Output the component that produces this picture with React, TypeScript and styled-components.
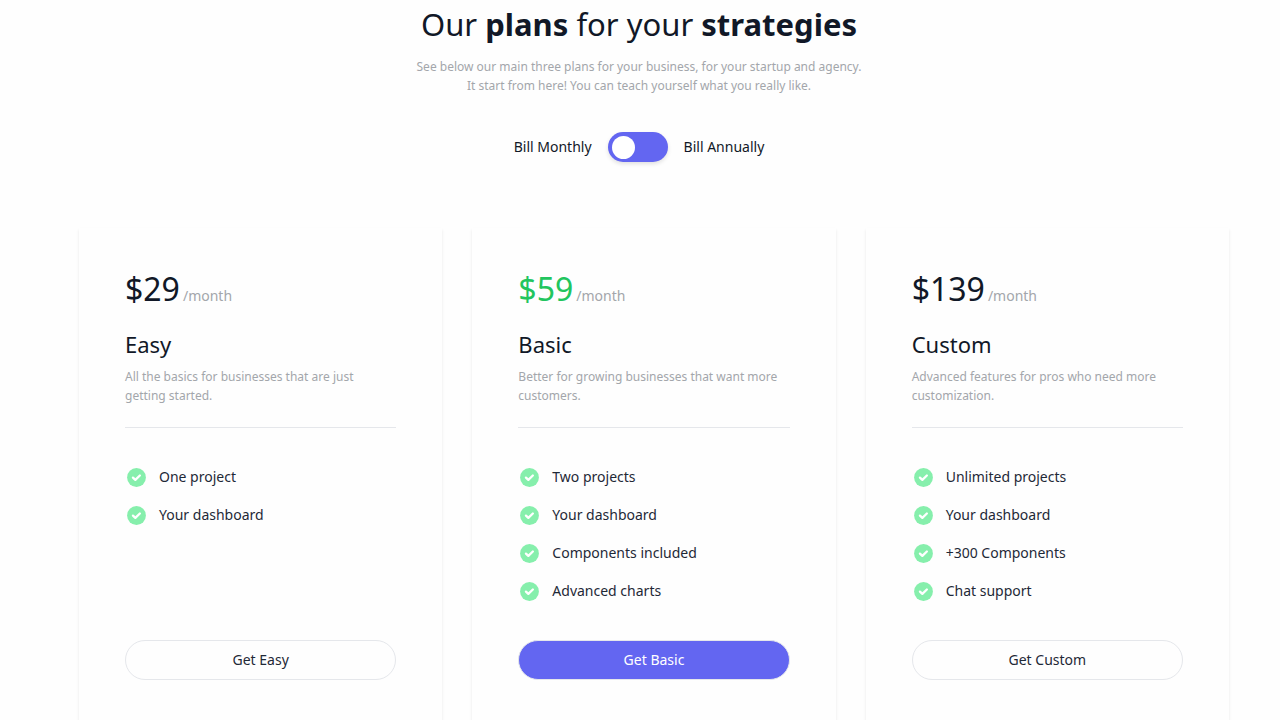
import React, { useState } from "react";
import styled, { createGlobalStyle } from "styled-components";

const GlobalStyle = createGlobalStyle`
  *, *::before, *::after { box-sizing: border-box; }
  body {
    margin: 0;
    background: #fefefe;
    color: #111827;
    font-family: "Noto Sans", "Open Sans", sans-serif;
    font-size: 14px;
    line-height: 24px;
  }
  h1, h2, p, ul { margin: 0; padding: 0; font-weight: 400; }
  ul { list-style: none; }
`;

const Page = styled.main`
  padding: 4px 51px 0 49px;
`;

const Header = styled.header`
  display: flex;
  flex-direction: column;
  align-items: center;
  text-align: center;
`;

const Title = styled.h1`
  font-size: 31px;
  line-height: 40px;
`;

const Muted = styled.p`
  color: #a3a6ab;
  font-size: 12px;
  line-height: 19px;
`;

const Intro = styled(Muted)`
  max-width: 520px;
  margin-top: 13px;
`;

const Billing = styled.div`
  display: flex;
  align-items: center;
  gap: 16px;
  margin-top: 37px;
`;

const Switch = styled.input`
  appearance: none;
  display: flex;
  align-items: center;
  width: 60px;
  height: 30px;
  margin: 0;
  padding: 0 4px;
  border-radius: 15px;
  background: #6366f1;
  box-shadow: 0 2px 4px rgba(0, 0, 0, 0.12);
  cursor: pointer;

  &::before {
    content: "";
    width: 23px;
    height: 23px;
    border-radius: 50%;
    background: #fff;
  }
  &:checked { justify-content: flex-end; }
`;

const Plans = styled.section`
  display: flex;
  margin-top: 66px;
`;

const Card = styled.article`
  flex: 1;
  display: flex;
  flex-direction: column;
  margin-left: 30px;
  padding: 41px 46px 48px;
  background: #fefefe;
  box-shadow: 0 2px 3px rgba(0, 0, 0, 0.09);
`;

const PriceLine = styled.p`
  display: flex;
  align-items: baseline;
  gap: 3px;
  line-height: 40px;
`;

const Price = styled.span<{ $accent?: boolean }>`
  font-size: 32px;
  color: ${(p) => (p.$accent ? "#22c55e" : "#111827")};
`;

const Period = styled.span`
  color: #a3a6ab;
`;

const PlanName = styled.h2`
  margin-top: 12px;
  font-size: 22px;
  line-height: 32px;
`;

const Summary = styled(Muted)`
  margin-top: 7px;
  padding-bottom: 22px;
  border-bottom: 1px solid #e5e7eb;
`;

const Features = styled.ul`
  flex: 1;
  display: flex;
  flex-direction: column;
  gap: 14px;
  margin-top: 37px;
`;

const Feature = styled.li`
  display: flex;
  align-items: center;
  gap: 11px;
  color: #1f2937;
`;

const PlanButton = styled.button<{ $accent?: boolean }>`
  height: 40px;
  margin-top: 37px;
  border: 1px solid #e5e7eb;
  border-radius: 20px;
  background: ${(p) => (p.$accent ? "#6366f1" : "#fefefe")};
  color: ${(p) => (p.$accent ? "#fff" : "#1f2937")};
  font: inherit;
  cursor: pointer;
`;

const CheckIcon = () => (
  <svg width="23" height="23" viewBox="0 0 24 24" aria-hidden="true">
    <circle cx="12" cy="12" r="9.8" fill="#86efac" />
    <path d="M8.3 12.1l2.5 2.4 4.7-4.6" fill="none" stroke="#fff" strokeWidth="2.4" strokeLinecap="round" strokeLinejoin="round" />
  </svg>
);

const plans = [
  {
    name: "Easy",
    price: "$29",
    summary: "All the basics for businesses that are just getting started.",
    features: ["One project", "Your dashboard"],
  },
  {
    name: "Basic",
    price: "$59",
    accent: true,
    summary: "Better for growing businesses that want more customers.",
    features: ["Two projects", "Your dashboard", "Components included", "Advanced charts"],
  },
  {
    name: "Custom",
    price: "$139",
    summary: "Advanced features for pros who need more customization.",
    features: ["Unlimited projects", "Your dashboard", "+300 Components", "Chat support"],
  },
];

export default function App() {
  const [annual, setAnnual] = useState(false);
  return (
    <>
      <GlobalStyle />
      <Page>
        <Header>
          <Title>
            Our <strong>plans</strong> for your <strong>strategies</strong>
          </Title>
          <Intro>
            See below our main three plans for your business, for your startup and agency.
            <br />
            It start from here! You can teach yourself what you really like.
          </Intro>
          <Billing>
            <label htmlFor="billing">Bill Monthly</label>
            <Switch id="billing" type="checkbox" role="switch" checked={annual} onChange={(e) => setAnnual(e.target.checked)} />
            <label htmlFor="billing">Bill Annually</label>
          </Billing>
        </Header>
        <Plans>
          {plans.map((plan) => (
            <Card key={plan.name}>
              <PriceLine>
                <Price $accent={plan.accent}>{plan.price}</Price>
                <Period>/month</Period>
              </PriceLine>
              <PlanName>{plan.name}</PlanName>
              <Summary>{plan.summary}</Summary>
              <Features>
                {plan.features.map((feature) => (
                  <Feature key={feature}>
                    <CheckIcon />
                    {feature}
                  </Feature>
                ))}
              </Features>
              <PlanButton type="button" $accent={plan.accent}>Get {plan.name}</PlanButton>
            </Card>
          ))}
        </Plans>
      </Page>
    </>
  );
}
